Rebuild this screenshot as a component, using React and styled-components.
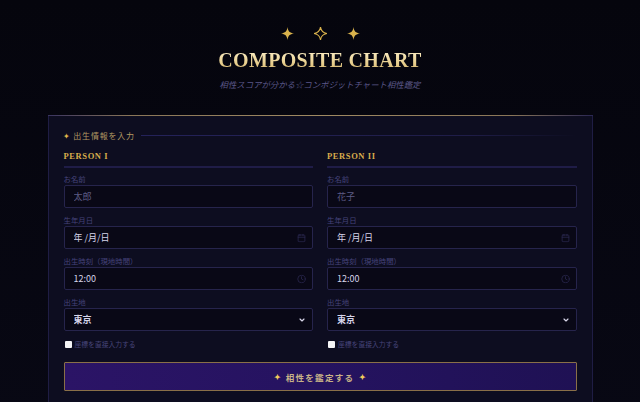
import React from 'react'
import styled, { createGlobalStyle } from 'styled-components'
import { Calendar, Clock, ChevronDown } from 'lucide-react'

const GlobalStyle = createGlobalStyle`
  html, body {
    margin: 0;
    padding: 0;
    background: #06060e;
  }
  body {
    font-family: "Noto Sans CJK JP", "Noto Sans", sans-serif;
    color: #c8c6e0;
  }
  * { box-sizing: border-box; }
`

const Page = styled.div`
  min-height: 402px;
  background: linear-gradient(180deg, #05050d 0%, #080814 100%);
  padding-top: 26px;
  overflow: hidden;
`

const Header = styled.header`
  display: flex;
  flex-direction: column;
  align-items: center;
`

const Stars = styled.div`
  display: flex;
  gap: 20px;
  height: 14px;
  align-items: center;
`

const Title = styled.h1`
  margin: 8px 0 0;
  font-family: "Liberation Serif", serif;
  font-weight: 700;
  font-size: 20px;
  letter-spacing: 0.3px;
  line-height: 25px;
  background: linear-gradient(180deg, #fff4d2 0%, #e8cf8e 60%, #cfae66 100%);
  -webkit-background-clip: text;
  background-clip: text;
  color: transparent;
`

const Subtitle = styled.p`
  margin: 5px 0 0;
  font-size: 8.4px;
  line-height: 12px;
  font-style: italic;
  color: #5a5788;
`

const Card = styled.section`
  position: relative;
  width: 545px;
  margin: 25px auto 0;
  padding: 13px 15px 30px;
  background: #0d0d20;
  border: 1px solid #1f1d44;
  border-top: none;

  &::before {
    content: "";
    position: absolute;
    left: -1px;
    right: -1px;
    top: 0;
    height: 1px;
    background: linear-gradient(90deg, #3a3460 0%, #8a7658 15%, #a08a62 50%, #8a7658 85%, #2a2752 100%);
  }
`

const Legend = styled.div`
  display: flex;
  align-items: center;
  height: 14px;
  font-size: 8px;
  letter-spacing: 0.8px;
  color: #b39a62;
`

const LegendStar = styled.span`
  color: #e0b94c;
  font-size: 8px;
  margin: 0 3px 0 -1px;
`

const LegendLine = styled.span`
  flex: 1;
  height: 1px;
  margin-left: 6px;
  background: linear-gradient(90deg, #24225a 0%, #1f1d48 75%, rgba(31, 29, 72, 0) 100%);
`

const Columns = styled.div`
  display: grid;
  grid-template-columns: 1fr 1fr;
  column-gap: 14px;
  margin-top: 9px;
`

const Column = styled.div`
  display: flex;
  flex-direction: column;
`

const PersonTitle = styled.h2`
  margin: 0 0 6px;
  padding-bottom: 4px;
  border-bottom: 2px solid #1f1c47;
  font-family: "Liberation Serif", serif;
  font-weight: 700;
  font-size: 8.5px;
  line-height: 11px;
  letter-spacing: 0.6px;
  color: #d8ad4c;
`

const Field = styled.div`
  display: flex;
  flex-direction: column;
  margin-bottom: 7px;
`

const Label = styled.label`
  display: block;
  height: 10px;
  font-size: 7.4px;
  line-height: 10px;
  margin-bottom: 1px;
  color: #45437a;
  white-space: nowrap;
`

const Control = styled.div`
  position: relative;
  height: 23px;
`

const Input = styled.input`
  display: block;
  width: 100%;
  height: 23px;
  margin: 0;
  padding: 0 9px;
  background: #090816;
  border: 1px solid #26244c;
  border-radius: 2px;
  color: ${p => (p.$strong ? '#d6d4ea' : '#c8c6e0')};
  font-family: "Noto Sans CJK JP", sans-serif;
  font-size: 9px;
  outline: none;

  &::placeholder {
    color: #5d5b84;
  }
`

const Select = styled.select`
  display: block;
  appearance: none;
  width: 100%;
  height: 23px;
  margin: 0;
  padding: 0 9px;
  background: #090816;
  border: 1px solid #26244c;
  border-radius: 2px;
  color: #d6d4ea;
  font-family: "Noto Sans CJK JP", sans-serif;
  font-size: 9px;
  font-weight: 700;
  outline: none;
`

const TrailIcon = styled.span`
  position: absolute;
  right: 7px;
  top: 50%;
  transform: translateY(-50%);
  display: flex;
  color: ${p => p.$color || '#2c2a52'};
`

const CheckRow = styled.label`
  display: flex;
  align-items: center;
  gap: 3px;
  height: 12px;
  font-size: 6.8px;
  color: #47457a;
`

const CheckBox = styled.span`
  width: 7px;
  height: 7px;
  background: #f4f4f6;
  border-radius: 1px;
  margin-left: 1px;
`

const SubmitButton = styled.button`
  display: flex;
  align-items: center;
  justify-content: center;
  gap: 5px;
  width: 100%;
  height: 29px;
  margin-top: 12px;
  background: linear-gradient(90deg, #2b1466 0%, #251360 50%, #1f1154 100%);
  border: 1px solid #8a7048;
  border-radius: 1px;
  color: #c8b388;
  font-family: "Noto Sans CJK JP", sans-serif;
  font-size: 8.5px;
  font-weight: 700;
  letter-spacing: 1.3px;
  cursor: pointer;
`

const ButtonStar = styled.span`
  color: #f0cd5c;
  font-size: 8px;
  letter-spacing: 0;
`

function Sparkle({ hollow }) {
  const d = 'M7 0 C7.6 4.6 9.4 6.4 14 7 C9.4 7.6 7.6 9.4 7 14 C6.4 9.4 4.6 7.6 0 7 C4.6 6.4 6.4 4.6 7 0 Z'
  return (
    <svg width="13" height="13" viewBox="0 0 14 14">
      {hollow ? (
        <path d={d} fill="none" stroke="#d9b24c" strokeWidth="1.2" strokeLinejoin="round" />
      ) : (
        <path d={d} fill="#d9b24c" />
      )}
    </svg>
  )
}

function PersonForm({ title, placeholder }) {
  return (
    <Column>
      <PersonTitle>{title}</PersonTitle>
      <Field>
        <Label>お名前</Label>
        <Control>
          <Input placeholder={placeholder} />
        </Control>
      </Field>
      <Field>
        <Label>生年月日</Label>
        <Control>
          <Input readOnly value="年 /月/日" $strong />
          <TrailIcon><Calendar size={9} strokeWidth={2} /></TrailIcon>
        </Control>
      </Field>
      <Field>
        <Label>出生時刻（現地時間）</Label>
        <Control>
          <Input readOnly value="12:00" $strong />
          <TrailIcon><Clock size={9} strokeWidth={2} /></TrailIcon>
        </Control>
      </Field>
      <Field>
        <Label>出生地</Label>
        <Control>
          <Select defaultValue="tokyo">
            <option value="tokyo">東京</option>
          </Select>
          <TrailIcon $color="#d8d6ea"><ChevronDown size={8} strokeWidth={3.5} /></TrailIcon>
        </Control>
      </Field>
      <CheckRow>
        <CheckBox />
        座標を直接入力する
      </CheckRow>
    </Column>
  )
}

export default function App() {
  return (
    <>
      <GlobalStyle />
      <Page>
        <Header>
          <Stars>
            <Sparkle />
            <Sparkle hollow />
            <Sparkle />
          </Stars>
          <Title>COMPOSITE CHART</Title>
          <Subtitle>相性スコアが分かる☆コンポジットチャート相性鑑定</Subtitle>
        </Header>
        <Card>
          <Legend>
            <LegendStar>✦</LegendStar>
            出生情報を入力
            <LegendLine />
          </Legend>
          <Columns>
            <PersonForm title="PERSON I" placeholder="太郎" />
            <PersonForm title="PERSON II" placeholder="花子" />
          </Columns>
          <SubmitButton>
            <ButtonStar>✦</ButtonStar>
            相性を鑑定する
            <ButtonStar>✦</ButtonStar>
          </SubmitButton>
        </Card>
      </Page>
    </>
  )
}
